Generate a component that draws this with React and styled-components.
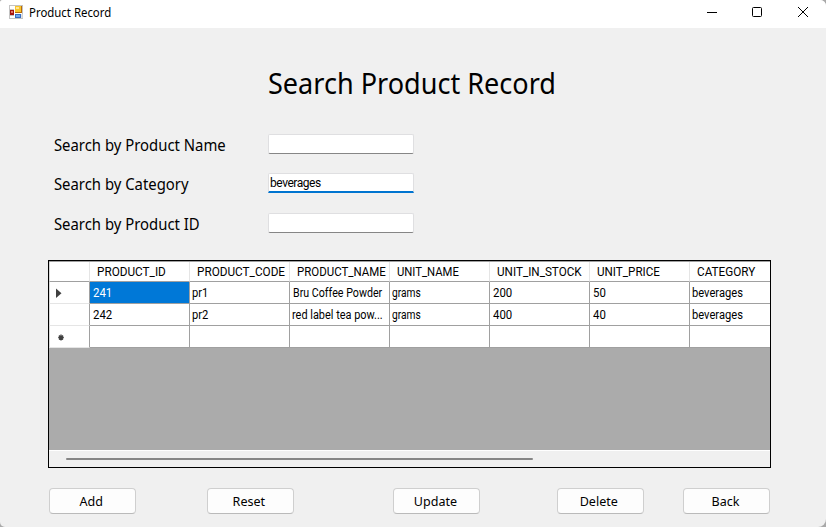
import React from "react";
import styled, { createGlobalStyle } from "styled-components";

const GlobalStyle = createGlobalStyle`
  *, *::before, *::after { box-sizing: border-box; }
  html, body { margin: 0; padding: 0; overflow: hidden; }
  body { background: #a9a9a9; }
`;

const UI_FONT = '"Noto Sans", "Open Sans", sans-serif';
const GRID_FONT = 'Roboto, "Liberation Sans", sans-serif';

const Window = styled.main`
  width: 826px;
  height: 527px;
  display: flex;
  flex-direction: column;
  background: #f0f0f0;
  border-radius: 3px 6px 8px 5px;
  overflow: hidden;
  font-family: ${UI_FONT};
  color: #000;
`;

const TitleBar = styled.header`
  height: 28px;
  flex: none;
  display: flex;
  align-items: flex-start;
  padding: 5px 16px 0 9px;
  background: #fff;
`;

const AppIcon = styled.svg`
  width: 14px;
  height: 14px;
  flex: none;
`;

const Caption = styled.span`
  margin-left: 6px;
  font-size: 12px;
  line-height: 16px;
  white-space: pre;
  transform: scaleX(0.95);
  transform-origin: left;
`;

const WindowControls = styled.div`
  margin-left: auto;
  display: flex;
  gap: 34px;
  padding-top: 1px;
  margin-right: 1px;
`;

const ControlIcon = styled.svg`
  width: 12px;
  height: 12px;
  fill: none;
  stroke: #000;
`;

const Form = styled.section`
  flex: 1;
  display: flex;
  flex-direction: column;
  padding: 33px 55px 0 48px;
`;

const Title = styled.h1`
  margin: 0 0 0 220px;
  height: 44px;
  font-size: 29px;
  font-weight: 400;
  line-height: 44px;
  white-space: nowrap;
  transform: scaleX(0.933);
  transform-origin: left;
`;

const Fields = styled.div`
  margin-top: 29px;
  display: grid;
  grid-template-rows: 39px 40px 20px;
`;

const Field = styled.label`
  display: grid;
  grid-template-columns: 214px 146px;
  align-items: start;
  padding-left: 5px;
`;

const FieldLabel = styled.span`
  padding-left: 1px;
  font-size: 16px;
  line-height: 22px;
  white-space: nowrap;
  transform: scaleX(0.93);
  transform-origin: left;
`;

const TextBox = styled.input`
  width: 146px;
  height: 20px;
  margin-left: 1px;
  padding: 0 0 0 1px;
  border: 1px solid #dfdfe1;
  border-bottom: ${(p) => (p.$focused ? "2px solid #0074d0" : "1px solid #868686")};
  border-radius: ${(p) => (p.$focused ? "2px 2px 0 0" : "2px")};
  outline: 0;
  background: #fff;
  color: #000;
  font: 12px ${GRID_FONT};
  letter-spacing: -0.45px;
`;

const DataGrid = styled.div`
  height: 208px;
  width: 723px;
  margin-top: 27px;
  display: flex;
  flex-direction: column;
  border: 1px solid #000;
  background: #ababab;
  font-family: ${GRID_FONT};
`;

const GridViewport = styled.div`
  flex: 1;
  padding-top: 1px;
  overflow: hidden;
  background: linear-gradient(#a0a0a0 0 1px, transparent 1px);
`;

const GridRow = styled.div`
  display: grid;
  grid-template-columns: 41px repeat(7, 100px);
  grid-template-rows: 100%;
  height: ${(p) => (p.$header ? 20 : 22)}px;
  background: #fff;
`;

const RowHeader = styled.div`
  display: flex;
  align-items: center;
  padding-left: 6px;
  border-left: 1px solid #d8d8d8;
  border-right: 1px solid ${(p) => (p.$corner ? "#e5e5e5" : "#a0a0a0")};
  border-bottom: 1px solid ${(p) => (p.$corner ? "#a0a0a0" : "#e5e5e5")};
`;

const ColumnHeader = styled.div`
  padding-left: 7px;
  border-right: 1px solid #e5e5e5;
  border-bottom: 1px solid #a0a0a0;
  font-size: 12px;
  line-height: 20px;
  white-space: nowrap;
`;

const Cell = styled.div`
  padding-left: ${(p) => p.$inset}px;
  border-right: 1px solid #a0a0a0;
  border-bottom: 1px solid #a0a0a0;
  background: ${(p) => (p.$selected ? "#0078d7" : "#fff")};
  color: ${(p) => (p.$selected ? "#fff" : "#000")};
  font-size: 12px;
  line-height: 22px;
  white-space: nowrap;
`;

const GridText = styled.span`
  display: inline-block;
  transform: scaleX(${(p) => p.$stretch});
  transform-origin: left;
`;

const Marker = styled.svg`
  width: 12px;
  height: 12px;
  fill: #404040;
`;

const ScrollBar = styled.div`
  height: 17px;
  flex: none;
  padding: 7px 0 0 17px;
  border-top: 1px solid #fff;
  background: #f0f0f0;
`;

const ScrollThumb = styled.div`
  width: 467px;
  height: 2px;
  border-radius: 1px;
  background: #868686;
`;

const Actions = styled.footer`
  margin-top: 20px;
  display: grid;
  grid-template-columns: 158px 186px 164px 126px 87px;
  padding-left: 1px;
`;

const ActionButton = styled.button`
  width: 87px;
  height: 26px;
  padding: 0 3px 0 0;
  border: 1px solid #cfcfcf;
  border-bottom-color: #bababa;
  border-radius: 4px;
  background: #fdfdfd;
  color: #000;
  font: 13px/24px ${UI_FONT};
`;

const ButtonText = styled.span`
  display: inline-block;
  transform: scaleX(0.965);
`;

const fields = [
  { label: "Search by Product Name", value: "" },
  { label: "Search by Category", value: "beverages", focused: true },
  { label: "Search by Product ID", value: "" },
];

const columns = [
  ["PRODUCT_ID", 0.98],
  ["PRODUCT_CODE", 0.98],
  ["PRODUCT_NAME", 0.956],
  ["UNIT_NAME", 0.94],
  ["UNIT_IN_STOCK", 0.973],
  ["UNIT_PRICE", 0.97],
  ["CATEGORY", 0.977],
];

const rows = [
  ["241", "pr1", "Bru Coffee Powder", "grams", "200", "50", "beverages"],
  ["242", "pr2", "red label tea pow...", "grams", "400", "40", "beverages"],
  ["", "", "", "", "", "", ""],
];

const stretchOf = (text) => {
  if (/^\d+$/.test(text)) return 0.95;
  if (text === "grams") return 0.85;
  if (text.startsWith("Bru")) return 0.89;
  return text.length > 10 ? 0.91 : 0.93;
};

function FormIcon() {
  return (
    <AppIcon viewBox="0 0 14 14">
      <path fill="#c3c3c3" d="M0 0h14v14H0z" />
      <path fill="#fff" d="M1 1h4v3H1zM1 11h4v2H1zM12.5 9h.8v4h-.8z" />
      <path fill="#fff" d="M5 1h1v12H5zM6 8h7v1H6z" />
      <path fill="#b86b09" d="M6 1h7v7H6z" />
      <path fill="#f8c52c" d="M6 1h6v6H6z" />
      <path fill="#ffe698" d="M7 2h3v2H7z" />
      <path fill="#a5120d" d="M1 5h4v5H1z" />
      <path fill="#e57865" d="M2 6h2v2H2z" />
      <path fill="#376dc1" d="M6 9h6v4H6z" />
      <path fill="#72a8ed" d="M7 10h4v2H7z" />
    </AppIcon>
  );
}

function RowMarker({ index }) {
  if (index === 0) {
    return (
      <Marker viewBox="0 0 12 12">
        <path d="M0 1.5 5.5 6.3 0 11z" />
      </Marker>
    );
  }
  if (index === 2) {
    return (
      <Marker viewBox="0 0 12 12">
        <path
          d="M5 3.5v6M2.2 6.5h5.6M3 4.5l4 4M7 4.5l-4 4"
          stroke="#404040"
          strokeWidth="1.3"
        />
      </Marker>
    );
  }
  return null;
}

export default function App() {
  return (
    <>
      <GlobalStyle />
      <Window>
        <TitleBar>
          <FormIcon />
          <Caption>Product Record</Caption>
          <WindowControls>
            <ControlIcon viewBox="0 0 12 12">
              <path d="M2 6.5h10" />
            </ControlIcon>
            <ControlIcon viewBox="0 0 12 12">
              <rect x="1.5" y="1.5" width="9" height="9" rx="1" />
            </ControlIcon>
            <ControlIcon viewBox="0 0 12 12">
              <path d="m1 1 10 10M11 1 1 11" />
            </ControlIcon>
          </WindowControls>
        </TitleBar>
        <Form>
          <Title>Search Product Record</Title>
          <Fields>
            {fields.map((f) => (
              <Field key={f.label}>
                <FieldLabel>{f.label}</FieldLabel>
                <TextBox defaultValue={f.value} $focused={f.focused} />
              </Field>
            ))}
          </Fields>
          <DataGrid>
            <GridViewport>
              <GridRow $header>
                <RowHeader $corner />
                {columns.map(([name, stretch]) => (
                  <ColumnHeader key={name}>
                    <GridText $stretch={stretch}>{name}</GridText>
                  </ColumnHeader>
                ))}
              </GridRow>
              {rows.map((row, r) => (
                <GridRow key={r}>
                  <RowHeader>
                    <RowMarker index={r} />
                  </RowHeader>
                  {row.map((text, c) => (
                    <Cell
                      key={c}
                      $selected={r === 0 && c === 0}
                      $inset={/^[\dB]/.test(text) ? 3 : 2}
                    >
                      <GridText $stretch={stretchOf(text)}>{text}</GridText>
                    </Cell>
                  ))}
                </GridRow>
              ))}
            </GridViewport>
            <ScrollBar>
              <ScrollThumb />
            </ScrollBar>
          </DataGrid>
          <Actions>
            {["Add", "Reset", "Update", "Delete", "Back"].map((name) => (
              <ActionButton key={name}>
                <ButtonText>{name}</ButtonText>
              </ActionButton>
            ))}
          </Actions>
        </Form>
      </Window>
    </>
  );
}
